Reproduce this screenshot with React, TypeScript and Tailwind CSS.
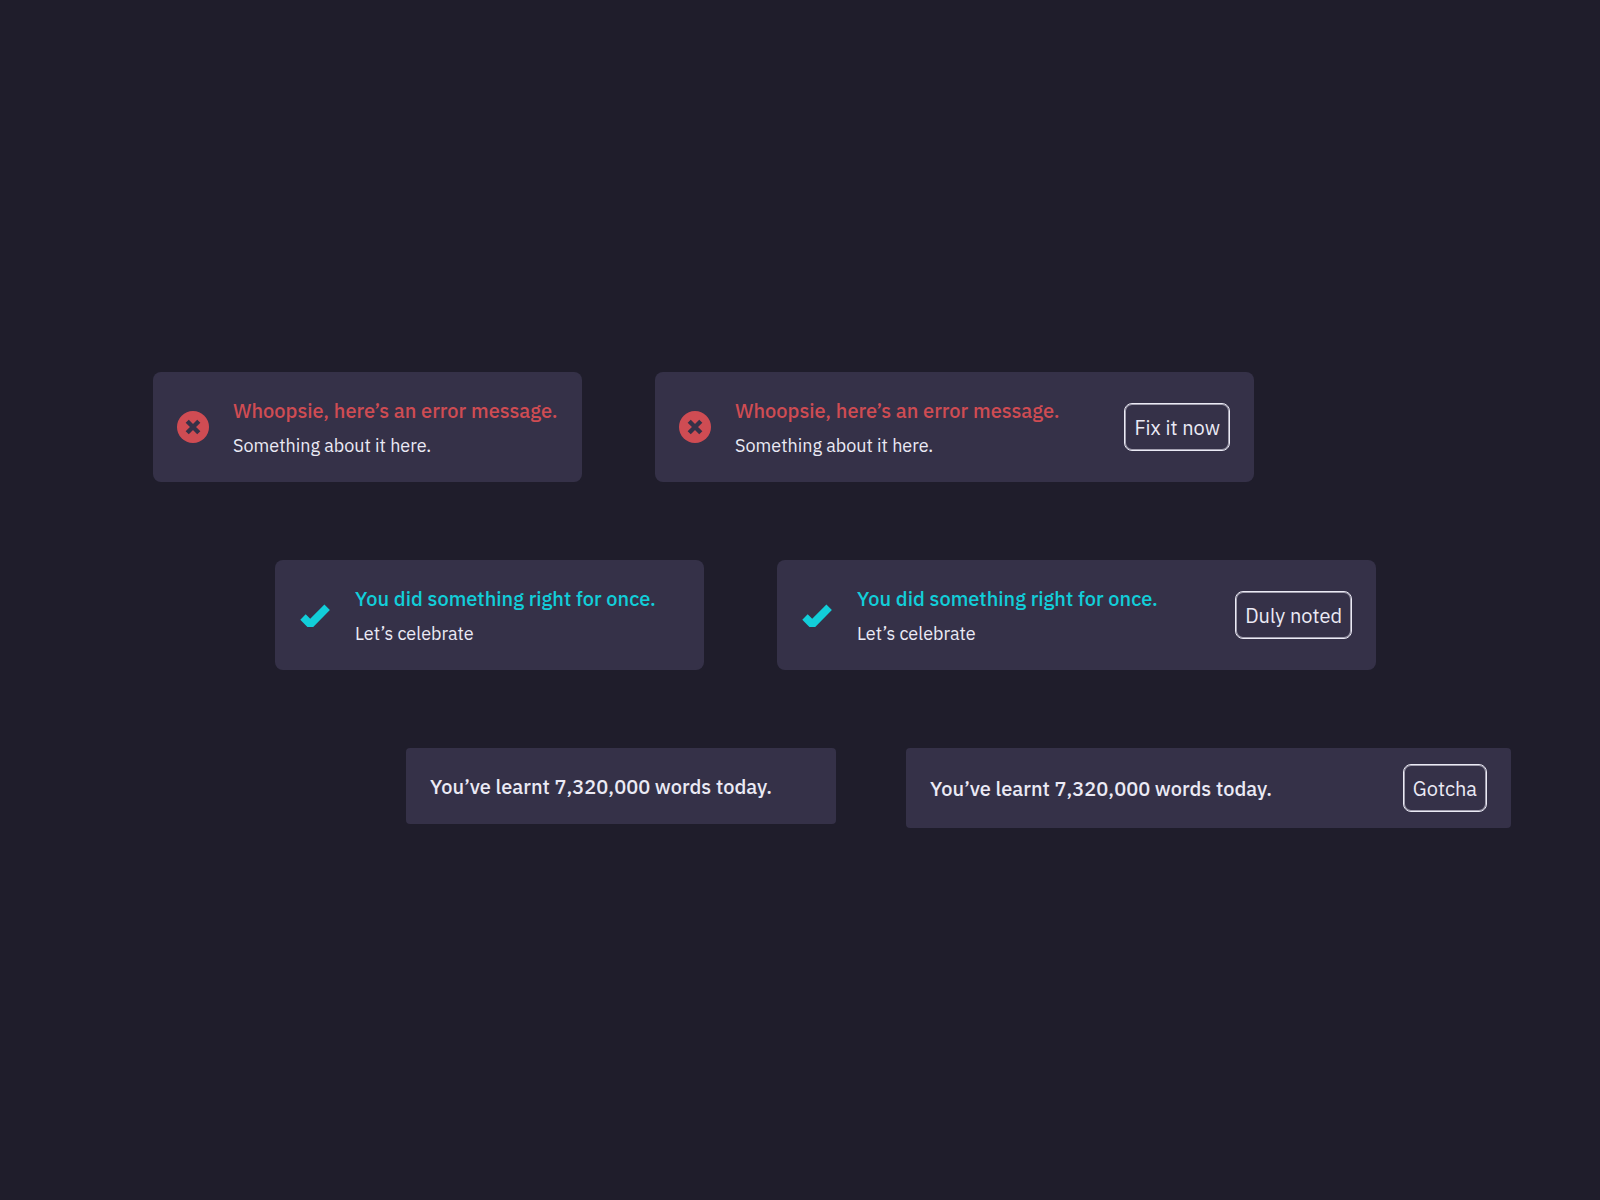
import type { ReactNode } from 'react';
import { clsx } from 'clsx';

type Tone = 'error' | 'success' | 'neutral';

type ToastProps = {
  tone?: Tone;
  title: string;
  message?: string;
  /** Label of the optional button on the right */
  action?: string;
};

function ErrorIcon() {
  return (
    <svg viewBox="0 0 32 32" className="h-8 w-8 shrink-0" aria-hidden>
      <circle cx="16" cy="16" r="16" fill="#cf4c53" />
      <path d="M10.2 10.2 L21.8 21.8 M21.8 10.2 L10.2 21.8" stroke="#353148" strokeWidth="4.4" fill="none" />
    </svg>
  );
}

function CheckIcon() {
  return (
    <svg viewBox="0 0 32 32" className="h-8 w-8 shrink-0" aria-hidden>
      <path d="M1.3 20.7 L6.7 15.3 L11.2 19.8 L25.4 5.4 L30.9 10.9 L14.2 28 H8.4 Z" fill="#12ced9" />
    </svg>
  );
}

const ICONS: Record<Tone, ReactNode> = {
  error: <ErrorIcon />,
  success: <CheckIcon />,
  neutral: null,
};

const TITLE_COLORS: Record<Tone, string> = {
  error: 'text-[#cf4c53]',
  success: 'text-[#12ced9]',
  neutral: 'text-[#ebeaf5]',
};

function Toast({ tone = 'neutral', title, message, action }: ToastProps) {
  const compact = !message;

  return (
    <div
      role={tone === 'error' ? 'alert' : 'status'}
      className={clsx(
        'flex shrink-0 items-center gap-6 bg-[#353148] px-6',
        compact ? 'rounded-sm' : 'rounded-lg py-6',
        compact && (action ? 'py-4' : 'py-[23px]'),
        action ? (compact ? 'w-[605px]' : 'w-[599px]') : compact ? 'w-[430px]' : 'w-[429px]',
      )}
    >
      {ICONS[tone]}
      <div className={clsx('min-w-0 flex-1', compact && 'pt-0.5')}>
        <p className={clsx('font-medium', compact ? 'text-xl/7' : 'text-xl/[30px]', TITLE_COLORS[tone])}>{title}</p>
        {message && <p className="mt-2 text-lg/6 text-[#ebeaf5]">{message}</p>}
      </div>
      {action && (
        <button
          type="button"
          className="h-12 shrink-0 cursor-pointer rounded-lg border border-[#ebeaf5] px-[9px] pt-0.5 text-xl text-[#ebeaf5] inset-ring inset-ring-[#ebeaf5]/60"
        >
          {action}
        </button>
      )}
    </div>
  );
}

export default function App() {
  return (
    <main className="flex min-h-screen flex-col justify-center gap-[78px] bg-[#1f1d2b] font-['IBM_Plex_Sans','Noto_Sans',sans-serif]">
      <div className="flex items-start gap-[73px] pl-[153px]">
        <Toast tone="error" title="Whoopsie, here’s an error message." message="Something about it here." />
        <Toast tone="error" title="Whoopsie, here’s an error message." message="Something about it here." action="Fix it now" />
      </div>

      <div className="flex items-start gap-[73px] pl-[275px]">
        <Toast tone="success" title="You did something right for once." message="Let’s celebrate" />
        <Toast tone="success" title="You did something right for once." message="Let’s celebrate" action="Duly noted" />
      </div>

      <div className="flex items-start gap-[70px] pl-[406px]">
        <Toast title="You’ve learnt 7,320,000 words today." />
        <Toast title="You’ve learnt 7,320,000 words today." action="Gotcha" />
      </div>
    </main>
  );
}
